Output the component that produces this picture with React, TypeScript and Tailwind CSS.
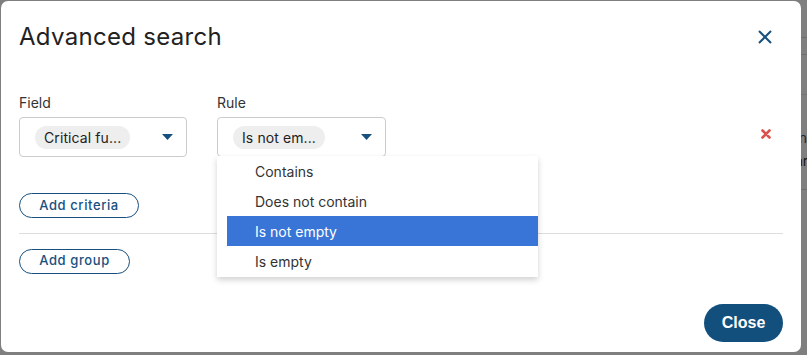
import React from 'react';

const Caret: React.FC = () => (
  <svg width="11" height="6" viewBox="0 0 11 6" className="shrink-0">
    <path d="M0 0 L11 0 L5.5 6 Z" fill="#17507f" />
  </svg>
);

const Select: React.FC<{ value: string; width: string }> = ({ value, width }) => (
  <div className={`${width} h-[40px] border border-[#cccccc] rounded-[4px] flex items-center justify-between pl-[15px] pr-[13px] bg-white`}>
    <span className="bg-[#eeeeee] rounded-full px-[9px] h-[23px] flex items-center text-[14px] text-[#222] tracking-[0.1px]">{value}</span>
    <Caret />
  </div>
);

const options = ['Contains', 'Does not contain', 'Is not empty', 'Is empty'];

const App: React.FC = () => {
  return (
    <div className="relative w-[807px] h-[355px] bg-white overflow-hidden font-['Inter','Noto_Sans',sans-serif]">
      {/* page behind the modal */}
      <div className="absolute right-0 top-0 w-[40px] h-full flex flex-col">
        <div className="h-[38px] border-b border-[#dddddd]" />
        <div className="h-[17px] border-b border-[#dddddd]" />
        <div className="h-[40px] border-b border-[#e8e8e8]" />
        <div className="h-[50px] flex items-end text-[14px] text-[#1a5585] pl-[24px] leading-none">any</div>
        <div className="h-[30px] flex items-center text-[14px] text-[#333] pl-[28px]">ar</div>
        <div className="h-[15px] border-b border-[#dddddd]" />
      </div>
      <div className="absolute inset-0 bg-black/50" />

      {/* modal */}
      <div className="absolute left-[1px] top-[1px] w-[800px] h-[351px] bg-white rounded-[7px] px-[18px] pt-[20px] flex flex-col">
        <div className="flex items-center justify-between h-[32px]">
          <h2 className="text-[24px] leading-[32px] text-[#222] tracking-[0.3px]">Advanced search</h2>
          <button className="w-[16px] h-[16px] mr-[10px] flex items-center justify-center">
            <svg width="16" height="16" viewBox="0 0 16 16">
              <path d="M2 2 L14 14 M14 2 L2 14" stroke="#17507f" strokeWidth="2" fill="none" />
            </svg>
          </button>
        </div>

        <div className="mt-[40px] flex items-start">
          <div className="flex flex-col">
            <label className="text-[14px] leading-[20px] text-[#333] mb-[4px]">Field</label>
            <Select value="Critical fu..." width="w-[168px]" />
          </div>
          <div className="flex flex-col ml-[30px] relative">
            <label className="text-[14px] leading-[20px] text-[#333] mb-[4px]">Rule</label>
            <Select value="Is not em..." width="w-[169px]" />
            <ul className="absolute left-0 top-[63px] w-[321px] bg-white pl-[10px] pb-[1px] shadow-[0_3px_6px_rgba(0,0,0,0.18)] z-10">
              {options.map((o) => (
                <li
                  key={o}
                  className={`h-[30px] flex items-center pl-[28px] text-[14px] ${o === 'Is not empty' ? 'bg-[#3875d7] text-white' : 'text-[#333]'}`}
                >
                  {o}
                </li>
              ))}
            </ul>
          </div>
          <div className="flex-1 flex justify-end pt-[36px] pr-[12px]">
            <svg width="10" height="10" viewBox="0 0 10 10">
              <path d="M1.5 1.5 L8.5 8.5 M8.5 1.5 L1.5 8.5" stroke="#d9534f" strokeWidth="2.6" strokeLinecap="round" fill="none" />
            </svg>
          </div>
        </div>

        <div className="mt-[35px]">
          <button className="h-[25px] w-[120px] border border-[#17507f] rounded-full text-[13px] font-medium text-[#17507f] tracking-[0.6px]">
            Add criteria
          </button>
        </div>

        <div className="mt-[15px] h-px bg-[#dddddd]" />

        <div className="mt-[13px]">
          <button className="h-[25px] w-[111px] border border-[#17507f] rounded-full text-[13px] font-medium text-[#17507f] tracking-[0.6px]">
            Add group
          </button>
        </div>

        <div className="mt-[30px] flex justify-end">
          <button className="h-[38px] w-[79px] rounded-full bg-[#134f7c] text-white text-[16px] font-bold font-['Liberation_Sans',Arial,sans-serif]">
            Close
          </button>
        </div>
      </div>
    </div>
  );
};

export default App;
